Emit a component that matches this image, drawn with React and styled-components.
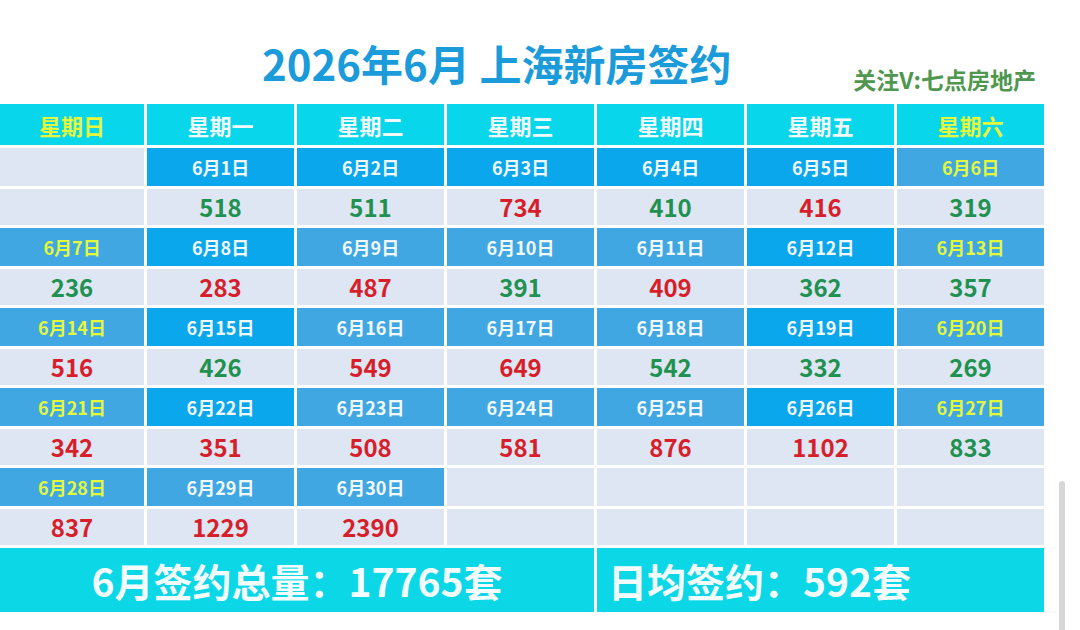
import styled, { createGlobalStyle } from "styled-components";

const GlobalStyle = createGlobalStyle`
  html, body {
    margin: 0;
    padding: 0;
    background: #ffffff;
    overflow: hidden;
  }
  body {
    font-family: "Noto Sans CJK SC", "Noto Sans", sans-serif;
  }
`;

const WEEKDAYS = ["星期日", "星期一", "星期二", "星期三", "星期四", "星期五", "星期六"];

const WEEKS = [
  [null, 1, 2, 3, 4, 5, 6],
  [7, 8, 9, 10, 11, 12, 13],
  [14, 15, 16, 17, 18, 19, 20],
  [21, 22, 23, 24, 25, 26, 27],
  [28, 29, 30, null, null, null, null],
];

const SALES = {
  1: 518, 2: 511, 3: 734, 4: 410, 5: 416, 6: 319,
  7: 236, 8: 283, 9: 487, 10: 391, 11: 409, 12: 362, 13: 357,
  14: 516, 15: 426, 16: 549, 17: 649, 18: 542, 19: 332, 20: 269,
  21: 342, 22: 351, 23: 508, 24: 581, 25: 876, 26: 1102, 27: 833,
  28: 837, 29: 1229, 30: 2390,
};

// 截图里这几天的日期格颜色更亮
const BRIGHT = [1, 2, 3, 4, 5, 8, 12, 15, 19, 22, 26];

export default function App() {
  return (
    <Page>
      <GlobalStyle />
      <Header>
        <Title>2026年6月 上海新房签约</Title>
        <Follow>关注V:七点房地产</Follow>
      </Header>

      <Grid>
        {WEEKDAYS.map((d, i) => (
          <WeekHead key={d} $weekend={i === 0 || i === 6}>
            {d}
          </WeekHead>
        ))}

        {WEEKS.map((week, w) => [
          ...week.map((day, i) =>
            day ? (
              <DateCell
                key={`d${w}${i}`}
                $bright={BRIGHT.includes(day)}
                $weekend={i === 0 || i === 6}
              >
                6月{day}日
              </DateCell>
            ) : (
              <EmptyCell key={`d${w}${i}`} />
            )
          ),
          ...week.map((day, i) =>
            day ? (
              <ValueCell
                key={`v${w}${i}`}
                $up={day > 1 && SALES[day] > SALES[day - 1]}
              >
                {SALES[day]}
              </ValueCell>
            ) : (
              <EmptyCell key={`v${w}${i}`} />
            )
          ),
        ])}

        <Total $span={4}>6月签约总量：17765套</Total>
        <Total $span={3} $left>
          日均签约：592套
        </Total>
      </Grid>

      <ScrollThumb />
    </Page>
  );
}

const Page = styled.div`
  position: relative;
  width: 1080px;
  height: 630px;
  overflow: hidden;
  background: #ffffff;
`;

const Header = styled.header`
  display: flex;
  justify-content: space-between;
  align-items: flex-start;
  height: 104px;
  padding: 0 44px 0 262px;
  box-sizing: border-box;
`;

const Title = styled.h1`
  margin: 42px 0 0;
  font-size: 42px;
  line-height: 1;
  font-weight: 700;
  color: #1b9bd9;
  white-space: pre;
`;

const Follow = styled.div`
  margin-top: 68px;
  font-size: 23px;
  line-height: 1;
  font-weight: 700;
  color: #4f974f;
`;

const Grid = styled.div`
  display: grid;
  grid-template-columns: 144px repeat(6, 147px);
  grid-template-rows: 41px repeat(5, 38px 36px) 64px;
  gap: 3px;
`;

const Cell = styled.div`
  display: flex;
  align-items: center;
  justify-content: center;
  font-weight: 700;
  line-height: 1;
`;

const WeekHead = styled(Cell)`
  background: #08d6ea;
  font-size: 22px;
  color: ${({ $weekend }) => ($weekend ? "#e4f83c" : "#f1fbfd")};
`;

const DateCell = styled(Cell)`
  background: ${({ $bright }) => ($bright ? "#0aa7ec" : "#40a7e2")};
  font-size: 18px;
  color: ${({ $weekend }) => ($weekend ? "#e4f83c" : "#f2f9fd")};
`;

const ValueCell = styled(Cell)`
  background: #dde6f2;
  font-size: 24px;
  color: ${({ $up }) => ($up ? "#d61f2b" : "#1f9150")};
`;

const EmptyCell = styled.div`
  background: #dde6f2;
`;

const Total = styled(Cell)`
  grid-column: span ${({ $span }) => $span};
  justify-content: ${({ $left }) => ($left ? "flex-start" : "center")};
  padding-left: ${({ $left }) => ($left ? "11px" : "0")};
  background: #0bd7e7;
  font-size: 39px;
  color: #f3fdfe;
`;

const ScrollThumb = styled.div`
  position: absolute;
  left: 1059px;
  top: 481px;
  width: 6px;
  height: 160px;
  border-radius: 3px;
  background: #d7d7d7;
`;
